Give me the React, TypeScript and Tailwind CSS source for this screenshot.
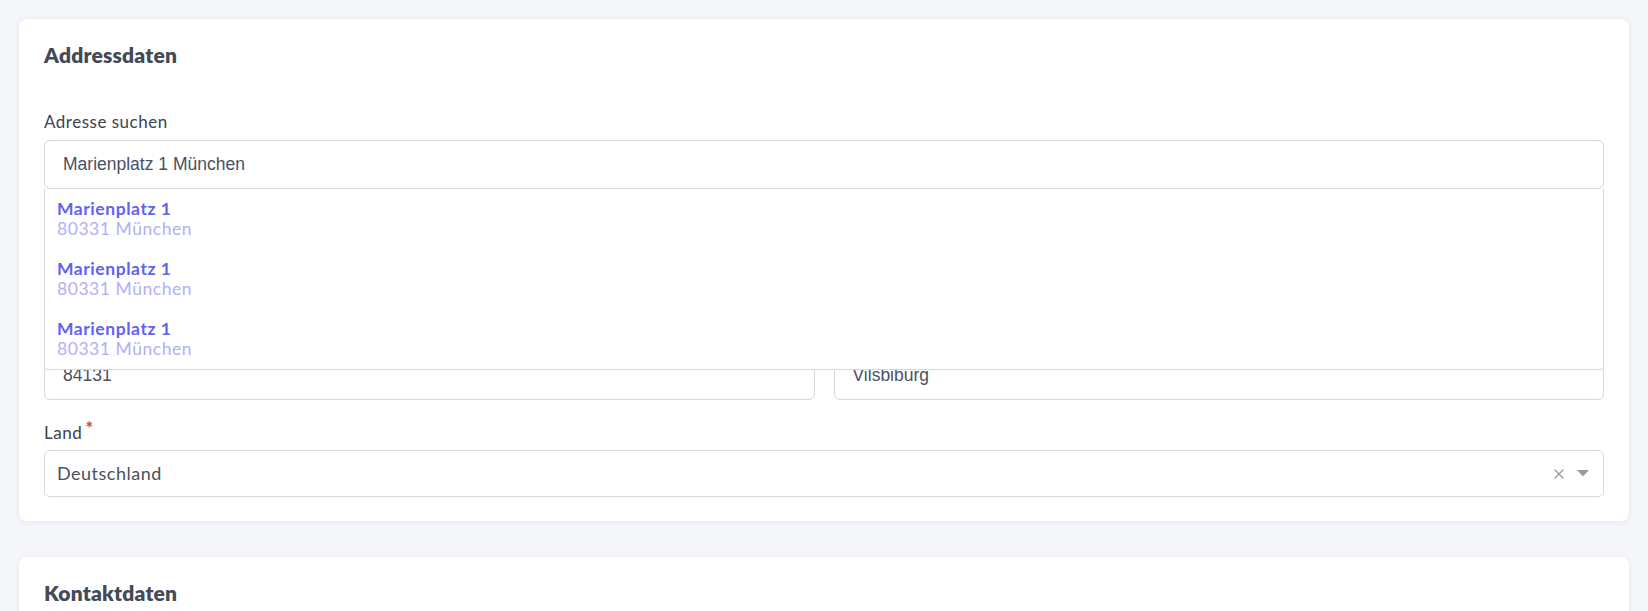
import { X } from 'lucide-react'

const geo = { fontFamily: 'Lato, "Noto Sans", sans-serif' }
const arial = { fontFamily: '"Liberation Sans", Arial, sans-serif' }

const suggestions = [
    { street: 'Marienplatz 1', city: '80331 München' },
    { street: 'Marienplatz 1', city: '80331 München' },
    { street: 'Marienplatz 1', city: '80331 München' },
]

function Label({ children, required }: { children: React.ReactNode; required?: boolean }) {
    return (
        <label className="block h-6 text-[17px] leading-6 tracking-[0.5px] text-[#3c4350] mb-[6px]" style={geo}>
            {children}
            {required && <span className="text-[#e53e3e] ml-[3px] relative -top-[4px] text-[19px] font-bold">*</span>}
        </label>
    )
}

function TextInput({ value }: { value: string }) {
    return (
        <div className="h-[49px] w-full rounded-md border border-[#d6d6de] bg-white flex items-center px-[18px] text-[17.5px] text-[#4a5161]" style={arial}>
            {value}
        </div>
    )
}

export default function App() {
    return (
        <div className="min-h-screen bg-[#f5f6fa] px-[19px] pt-[19px] pb-6 flex flex-col gap-9">
            <div className="bg-white rounded-lg shadow-[0_1px_6px_rgba(30,40,70,0.08)] px-[25px] pt-[22px] pb-6">
                <h2 className="text-[21px] leading-7 font-extrabold tracking-[0.2px] text-[#434a58]" style={geo}>Addressdaten</h2>

                <div className="mt-[41px] relative">
                    <Label>Adresse suchen</Label>
                    <TextInput value="Marienplatz 1 München" />

                    {/* suggestion list lies over the fields below */}
                    <div className="absolute left-0 right-0 top-[79px] z-10 bg-white border border-t-0 border-[#d6d6de] rounded-b-sm">
                        {suggestions.map((s, i) => (
                            <div key={i} className="h-[60px] px-3 py-[10px] leading-5 text-[17.5px] tracking-[0.55px]" style={geo}>
                                <div className="font-bold text-[#6262f2]">{s.street}</div>
                                <div className="text-[#b1aff9]">{s.city}</div>
                            </div>
                        ))}
                    </div>

                    <div className="mt-[33px] grid grid-cols-[2fr_1fr] gap-[19px]">
                        <div>
                            <Label required>Straße</Label>
                            <TextInput value="Marktplatz" />
                        </div>
                        <div>
                            <Label required>Hausnummer</Label>
                            <TextInput value="1" />
                        </div>
                    </div>

                    <div className="mt-5 grid grid-cols-2 gap-[19px]">
                        <div>
                            <Label required>PLZ</Label>
                            <TextInput value="84131" />
                        </div>
                        <div>
                            <Label required>Ort</Label>
                            <TextInput value="Vilsbiburg" />
                        </div>
                    </div>

                    <div className="mt-5">
                        <Label required>Land</Label>
                        <div className="h-[47px] w-full rounded-md border border-[#d6d6de] bg-white flex items-center pl-3 pr-3 text-[18px] tracking-[0.5px] text-[#4a5161]" style={geo}>
                            <span className="flex-1">Deutschland</span>
                            <X className="w-4 h-4 text-[#9a9a9a] mr-[10px]" strokeWidth={1.8} />
                            <svg width="12" height="7" viewBox="0 0 12 7" className="mr-[2px]">
                                <path d="M0 0h12L6 6.5z" fill="#9a9a9a" />
                            </svg>
                        </div>
                    </div>
                </div>
            </div>

            <div className="bg-white rounded-lg shadow-[0_1px_6px_rgba(30,40,70,0.08)] px-[25px] pt-[22px] pb-6">
                <h2 className="text-[21px] leading-7 font-extrabold tracking-[0.2px] text-[#434a58]" style={geo}>Kontaktdaten</h2>
                <div className="mt-[41px]">
                    <Label required>E-Mail</Label>
                    <TextInput value="" />
                </div>
            </div>
        </div>
    )
}
